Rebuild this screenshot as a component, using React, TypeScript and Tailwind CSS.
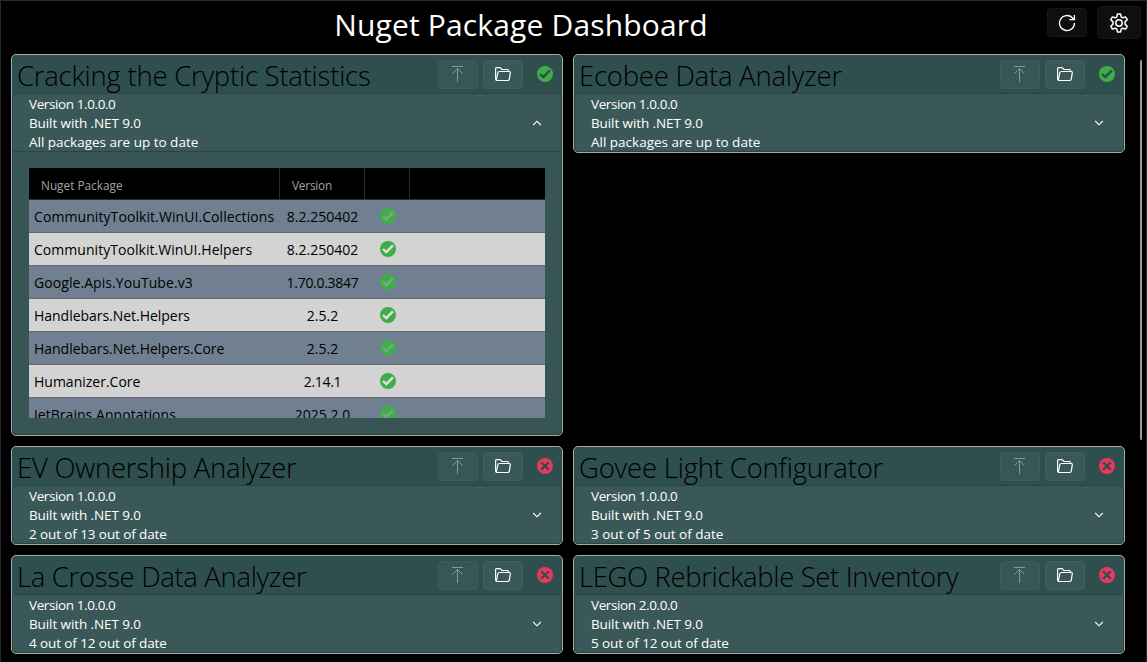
type Status = "ok" | "bad";

function StatusIcon({ status, mark }: { status: Status; mark: string }) {
  return (
    <svg width="16" height="16" viewBox="0 0 16 16" fill="none" className="block shrink-0">
      <circle cx="8" cy="8" r="8" fill={status === "ok" ? "#3fae49" : "#e8385f"} />
      {status === "ok" ? (
        <path d="M3 8.2l3.300 2.800L12.900 4.400" stroke={mark} strokeWidth="2.400" />
      ) : (
        <path d="M4.200 4.200l7.600 7.600M11.800 4.200l-7.600 7.600" stroke={mark} strokeWidth="2.300" />
      )}
    </svg>
  );
}

function UploadIcon() {
  return (
    <svg width="16" height="17" viewBox="0 0 16 17" fill="none" stroke="#84999a" strokeWidth="1">
      <path d="M2 .5h11M7.500 2.500V16M2.500 7.500l5-5 5 5" />
    </svg>
  );
}

function FolderIcon() {
  return (
    <svg width="16" height="15" viewBox="0 0 16 15" fill="none" stroke="#ffffff" strokeWidth="1.200" strokeLinejoin="round">
      <path d="M1.300 13L.6 12V1.600Q.6.600 1.600.600h3.200q.6 0 1 .5l1 1.400h5.600q1 0 1 1v1" />
      <path d="M1.300 13.500l1.500-7.700q.3-1.300 1.600-1.300h9.900q1.200 0 1 1.200l-1 6.500q-.2 1.300-1.500 1.300z" />
    </svg>
  );
}

function RefreshIcon() {
  return (
    <svg width="18" height="18" viewBox="0 0 18 18" fill="none" stroke="#ffffff" strokeWidth="1.300">
      <path d="M16.500 9a7.500 7.500 0 1 1-2.200-5.300L16 5.500" />
      <path d="M16.400 1v4.700h-5" />
    </svg>
  );
}

function GearIcon() {
  return (
    <svg width="20" height="20" viewBox="0 0 20 20" fill="none" stroke="#ffffff" strokeWidth="1.500" strokeLinejoin="round">
      <circle cx="10" cy="10" r="3.200" />
      <path d="M8.500 1h3l.7 2.900 1.500.9 2.900-.9 1.600 2.800L16 8.900v2.200l2.200 2.200-1.600 2.800-2.900-.9-1.500.9-.7 2.900h-3l-.7-2.900-1.500-.9-2.900.9-1.600-2.800L4 11.100V8.900L1.800 6.700l1.600-2.800 2.900.9 1.500-.9z" />
    </svg>
  );
}

function Chevron({ up }: { up?: boolean }) {
  return (
    <svg width="10" height="6" viewBox="0 0 10 6" fill="none" stroke="#ffffff" strokeWidth="1.100">
      <path d={up ? "M1.200 5L5 1.200 8.800 5" : "M1.200 1L5 4.800 8.800 1"} />
    </svg>
  );
}

const packages = [
  ["CommunityToolkit.WinUI.Collections", "8.2.250402", "tracking-[0.08px]"],
  ["CommunityToolkit.WinUI.Helpers", "8.2.250402", "tracking-[0.04px]"],
  ["Google.Apis.YouTube.v3", "1.70.0.3847", "tracking-[0.07px]"],
  ["Handlebars.Net.Helpers", "2.5.2", "tracking-[-0.03px]"],
  ["Handlebars.Net.Helpers.Core", "2.5.2", "tracking-[-0.03px]"],
  ["Humanizer.Core", "2.14.1", "tracking-[0px]"],
  ["JetBrains.Annotations", "2025.2.0", "tracking-[0.04px]"],
];

function PackageTable() {
  return (
    <div className="mx-4 mt-4 h-[250px] overflow-hidden">
      <div className="flex h-8 border-b border-[#2c2c2c] bg-black text-[11.800px] leading-[34px] text-[#a3a3a3]">
        <div className="w-[251px] border-r border-[#2c2c2c] pl-3">Nuget Package</div>
        <div className="w-[85px] border-r border-[#2c2c2c] pl-3 tracking-[-0.2px]">Version</div>
        <div className="w-[45px] border-r border-[#2c2c2c]" />
      </div>
      {packages.map(([name, version, tracking], i) => (
        <div
          key={name}
          className={`flex h-[33px] items-center border-b border-[#6a6a6a] text-[14px] leading-5 text-black ${
            i % 2 ? "bg-[#d3d3d3]" : "bg-[#708090]"
          }`}
        >
          <div className={`w-[251px] pt-0.5 pl-[5px] whitespace-nowrap ${tracking}`}>{name}</div>
          <div className={`w-[85px] pt-0.5 text-center ${version.includes("1") ? "tracking-[-0.3px]" : ""}`}>{version}</div>
          <div className="flex w-[45px] justify-center">
            <StatusIcon status="ok" mark={i % 2 ? "#e0e0e0" : "#78a88a"} />
          </div>
        </div>
      ))}
    </div>
  );
}

interface Project {
  name: string;
  tracking: string;
  version: string;
  summary: string;
  status: Status;
  open?: boolean;
}

const projects: Project[] = [
  { name: "Cracking the Cryptic Statistics", tracking: "tracking-[-0.24px]", version: "1.0.0.0", summary: "All packages are up to date", status: "ok", open: true },
  { name: "Ecobee Data Analyzer", tracking: "tracking-[-0.24px]", version: "1.0.0.0", summary: "All packages are up to date", status: "ok" },
  { name: "EV Ownership Analyzer", tracking: "tracking-[-0.24px]", version: "1.0.0.0", summary: "2 out of 13 out of date", status: "bad" },
  { name: "Govee Light Configurator", tracking: "tracking-[-0.2px]", version: "1.0.0.0", summary: "3 out of 5 out of date", status: "bad" },
  { name: "La Crosse Data Analyzer", tracking: "tracking-[-0.34px]", version: "1.0.0.0", summary: "4 out of 12 out of date", status: "bad" },
  { name: "LEGO Rebrickable Set Inventory", tracking: "tracking-[-0.36px]", version: "2.0.0.0", summary: "5 out of 12 out of date", status: "bad" },
];

function ProjectCard({ project }: { project: Project }) {
  return (
    <section className={`flex flex-col rounded-[5px] border border-[#a9a9a9] bg-[#2f4f4f] ${project.open ? "h-[382px]" : "h-[99px]"}`}>
      <header className="flex h-[38px] shrink-0 items-center pr-[9px] pl-[5px]">
        <h2 className={`mt-[4px] flex-1 text-[27.500px] leading-[38px] font-light whitespace-nowrap text-black ${project.tracking}`}>
          {project.name}
        </h2>
        <button className="mt-px mr-[5px] flex h-[29px] w-10 items-center justify-center rounded border border-[#3d5b5b] bg-[#395656]">
          <UploadIcon />
        </button>
        <button className="mt-px mr-[14px] flex h-[29px] w-10 items-center justify-center rounded border border-[#3f5e5e] bg-[#3b5859]">
          <FolderIcon />
        </button>
        <StatusIcon status={project.status} mark="#2f4f4f" />
      </header>
      <div className="flex flex-1 flex-col overflow-hidden rounded-[4px] border border-[#294646] bg-[#365554]">
        <div
          className={`flex shrink-0 items-center bg-[#3b5858] pr-[19px] pl-4 ${
            project.open ? "h-[58px] border-b border-[#294646]" : "h-[57px]"
          }`}
        >
          <div className="flex-1 pt-0.5 text-[13.500px] leading-[19px] text-white">
            <p className="tracking-[-0.4px]">Version {project.version}</p>
            <p className="tracking-[-0.1px]">Built with .NET 9.0</p>
            <p className={project.summary.includes("1") ? "tracking-[-0.1px]" : ""}>{project.summary}</p>
          </div>
          <Chevron up={project.open} />
        </div>
        {project.open && <PackageTable />}
      </div>
    </section>
  );
}

export default function App() {
  return (
    <div className="flex h-[662px] w-[1147px] flex-col overflow-hidden border-t border-r border-l border-[#25282d] bg-black font-['Open_Sans','Noto_Sans',sans-serif]">
      <div className="flex h-[53px] shrink-0 pr-[5px]">
        <h1 className="flex-1 pt-px pr-[6px] text-center text-[30px] leading-[45px] tracking-[0.16px] text-white">Nuget Package Dashboard</h1>
        <button className="mt-[7px] mr-[10px] flex h-[29px] w-10 items-center justify-center rounded border border-[#161616] bg-[#0f0f0f]">
          <RefreshIcon />
        </button>
        <button className="mt-[5px] flex h-[33px] w-11 items-center justify-center rounded border border-[#161616] bg-[#0f0f0f]">
          <GearIcon />
        </button>
      </div>
      <div className="flex flex-1 overflow-hidden">
        <div className="ml-[10px] grid w-[1114px] grid-cols-2 content-start items-start gap-[10px]">
          {projects.map((p) => (
            <ProjectCard key={p.name} project={p} />
          ))}
        </div>
        <div className="mt-[6px] ml-[15px] h-[380px] w-0.5 rounded-full bg-[#9a9a9a]" />
      </div>
    </div>
  );
}
